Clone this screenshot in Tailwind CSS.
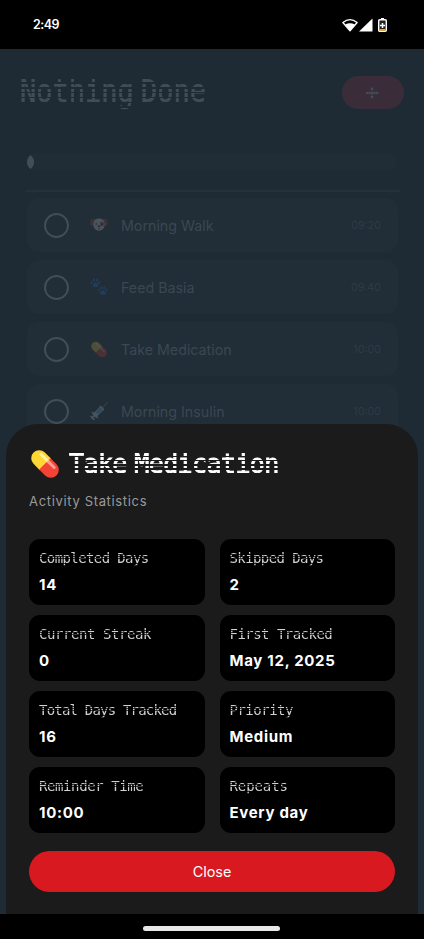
<!DOCTYPE html>
<html lang="en">
<head>
<meta charset="utf-8">
<meta name="viewport" content="width=device-width, initial-scale=1">
<title>Nothing Done</title>
<script src="https://cdn.jsdelivr.net/npm/@tailwindcss/browser@4"></script>
</head>
<body class="bg-black font-['Inter',sans-serif]">
<svg class="hidden">
  <symbol id="pill" viewBox="0 0 32 32">
    <g transform="rotate(45 16 16)">
      <path d="M15.7 8H6.8a8 8 0 0 0 0 16h8.9z" transform="translate(1 0)" fill="#fdd835"/>
      <path d="M16.7 8h8.5a8 8 0 0 1 0 16h-8.5z" transform="translate(-1 0)" fill="#f44336"/>
      <path d="M6.5 12h9.5" stroke="#fff0a0" stroke-width="3" stroke-linecap="round"/>
      <path d="M17 12h8" stroke="#ff9b91" stroke-width="3" stroke-linecap="round"/>
    </g>
  </symbol>
</svg>
<div class="relative flex h-[939px] w-[424px] flex-col overflow-hidden">
  <header class="flex h-[49px] shrink-0 items-center justify-between bg-black pl-[33px] pr-[36px] text-white">
    <span class="pt-px text-[12.5px] font-semibold tracking-[-0.5px]">2:49</span>
    <div class="flex items-center">
      <svg class="h-[14px] w-[16px]" viewBox="0 0 16 14"><path d="M.9 4.5Q8-1.3 15.1 4.5L8 12.8z" fill="none" stroke="#fff" stroke-width="1.4" stroke-linejoin="round"/><path d="M3.2 6.600Q8 4 12.800 6.600L8 13z" fill="#fff"/></svg>
      <svg class="ml-px h-[14px] w-[14px]" viewBox="0 0 14 14"><path d="M0 13.5 13.5.5v13z" fill="#fff"/></svg>
      <svg class="ml-[5px] mr-px h-[14px] w-[9px]" viewBox="0 0 9 14"><path d="M3 0h3v2H3z" fill="#fff"/><rect x=".7" y="1.7" width="7.6" height="11.6" rx="1" fill="#222" stroke="#fff" stroke-width="1.4"/><path d="M4.5 5v5M2 7.5h5" stroke="#fff" stroke-width="1.5"/><path d="M1.5 11h6v1.8h-6z" fill="#f5a623"/></svg>
    </div>
  </header>

  <main class="h-[865px] shrink-0 bg-[#1e2b35] pt-[26px]">
    <div class="flex h-[33px] items-center justify-between pl-[20px] pr-[20px]">
      <h1 class="h-[33px] w-[200px] scale-y-[1.15] whitespace-nowrap font-['DejaVu_Sans_Mono',monospace] text-[27px] leading-[33px] tracking-[0px] text-[#414e58] [word-spacing:-9px] [-webkit-text-stroke:0.5px_#414e58] [mask-image:repeating-linear-gradient(transparent_0_1.4px,#000_1.4px_4.2px)]">Nothing Done</h1>
      <button class="mb-[-2px] flex h-[33px] w-[62px] items-center justify-center rounded-full bg-[#3a2d39]" aria-label="Add">
        <svg class="h-[14px] w-[14px]" viewBox="0 0 14 14" fill="#414e58"><circle cx="6" cy="3" r="1.4"/><circle cx="6" cy="7" r="1.5"/><circle cx="6" cy="11" r="1.4"/><circle cx=".8" cy="7" r="1.3"/><circle cx="3.4" cy="7" r="1.3"/><circle cx="8.6" cy="7" r="1.3"/><circle cx="11.2" cy="7" r="1.3"/></svg>
      </button>
    </div>
    <div class="ml-[27px] mt-[45px] flex h-[17px] w-[370px] items-center rounded-[8px] bg-[#202d37]">
      <svg class="h-[14px] w-[7px]" viewBox="0 0 7 14"><path d="M3.5 0C8.2 4 8.2 10 3.5 14C-1.2 10-1.2 4 3.5 0" fill="#414e58"/></svg>
    </div>
    <div class="ml-[25px] mt-[20px] h-[2px] w-[375px] bg-[#24303a]"></div>
    <ul class="mt-[6px] flex flex-col gap-[8px] pl-[27px] pr-[26px] text-[#3b4852]">
      <li class="flex h-[54px] items-center rounded-[12px] bg-[#212d37] pl-[17px] pr-[17px]">
        <span class="h-[25px] w-[25px] rounded-full border-2 border-[#414e58]"></span>
        <svg class="ml-[21px] h-[18px] w-[18px]" viewBox="0 0 18 18"><path d="M5 3Q1 2 .3 6q-.3 4 1.700 4t3-3.500M13 3q4-1 4.700 3 .3 4-1.700 4t-3-3.500" fill="#3c3237"/><path d="M3.500 7Q4 2.500 9 2.500T14.500 7q.8 4-2 6.500-3.500 2.500-7 0-2.800-2.500-2-6.500" fill="#48535a"/><ellipse cx="12" cy="8" rx="1.900" ry="2.300" fill="#43333c"/><circle cx="6.300" cy="8" r=".8" fill="#252b32"/><circle cx="11.800" cy="8" r=".8" fill="#252b32"/><ellipse cx="9" cy="10.300" rx="1.400" ry=".9" fill="#252b32"/><path d="M8.300 12.300h1.500v1.500H8.300z" fill="#4b303b"/></svg>
        <span class="ml-[13px] flex-1 pt-[2px] text-[14.25px]">Morning Walk</span><span class="pt-[2px] text-[10.7px] text-[#2f3b45]">09:20</span>
      </li>
      <li class="flex h-[54px] items-center rounded-[12px] bg-[#212d37] pl-[17px] pr-[17px]">
        <span class="h-[25px] w-[25px] rounded-full border-2 border-[#414e58]"></span>
        <svg class="ml-[21px] h-[18px] w-[18px]" viewBox="0 0 18 18" fill="#213f5b"><ellipse cx="1.700" cy="4.500" rx="1.100" ry="1.600"/><ellipse cx="4" cy="2" rx="1.100" ry="1.600"/><ellipse cx="7" cy="2" rx="1.100" ry="1.600"/><ellipse cx="9.300" cy="4.500" rx="1.100" ry="1.600"/><path d="M5.500 4.500q2 0 3 3 0 2-3 1.300-3 .7-3-1.300 1-3 3-3"/><ellipse cx="9.200" cy="12" rx="1" ry="1.500"/><ellipse cx="11.500" cy="9.800" rx="1" ry="1.500"/><ellipse cx="14.300" cy="9.800" rx="1" ry="1.500"/><ellipse cx="16.500" cy="12" rx="1" ry="1.500"/><path d="M13 12.300q2 0 3 3 0 2-3 1.300-3 .7-3-1.300 1-3 3-3"/></svg>
        <span class="ml-[13px] flex-1 pt-[2px] text-[14.25px]">Feed Basia</span><span class="pt-[2px] text-[10.7px] text-[#2f3b45]">09:40</span>
      </li>
      <li class="flex h-[54px] items-center rounded-[12px] bg-[#212d37] pl-[17px] pr-[17px]">
        <span class="h-[25px] w-[25px] rounded-full border-2 border-[#414e58]"></span>
        <svg class="ml-[21px] h-[19px] w-[18px] opacity-20"><use href="#pill"/></svg>
        <span class="ml-[13px] flex-1 pt-[2px] text-[14.25px]">Take Medication</span><span class="pt-[2px] text-[10.7px] text-[#2f3b45]">10:00</span>
      </li>
      <li class="flex h-[54px] items-center rounded-[12px] bg-[#212d37] pl-[17px] pr-[17px]">
        <span class="h-[25px] w-[25px] rounded-full border-2 border-[#414e58]"></span>
        <svg class="ml-[21px] h-[18px] w-[18px]" viewBox="0 0 18 18"><path d="m12 6 5.500-5.500" stroke="#245050"/><path d="m4 14 8-8" stroke="#42525e" stroke-width="5"/><path d="m7 11 5-5" stroke="#304958" stroke-width="3"/><path d="m1.500 16.500 3-3M.5 14l4 4M2 10l6 6M10 4l4 4" stroke="#465661" stroke-width="1.500"/></svg>
        <span class="ml-[13px] flex-1 pt-[2px] text-[14.25px]">Morning Insulin</span><span class="pt-[2px] text-[10.7px] text-[#2f3b45]">10:00</span>
      </li>
    </ul>
  </main>

  <section class="absolute left-[6px] top-[424px] h-[490px] w-[412px] rounded-t-[32px] bg-[#1b1b1b] pl-[23px] pr-[23px] pt-[24px]">
    <div class="flex h-[32px] items-center">
      <svg class="h-[32px] w-[32px]"><use href="#pill"/></svg>
      <h2 class="ml-[8px] h-[32px] w-[230px] scale-y-[1.07] whitespace-nowrap font-['DejaVu_Sans_Mono',monospace] text-[25px] leading-[32px] tracking-[-0.6px] text-white [word-spacing:-7px] [-webkit-text-stroke:0.8px_#fff] [mask-image:repeating-linear-gradient(#000_0_0.7px,transparent_0.7px_1.9px,#000_1.9px_3.9px)]">Take Medication</h2>
    </div>
    <p class="mt-[11px] text-[13px] leading-[20px] tracking-[0.66px] text-[#9a9a9a]">Activity Statistics</p>
    <dl class="mt-[28px] grid grid-cols-2 gap-x-[15px] gap-y-[10px] [&>div]:h-[66px] [&>div]:rounded-[11px] [&>div]:bg-black [&>div]:px-[10px] [&>div]:pt-[10px] [&_dt]:scale-y-[1.06] [&_dt]:whitespace-nowrap [&_dt]:font-['DejaVu_Sans_Mono',monospace] [&_dt]:text-[14px] [&_dt]:leading-[18px] [&_dt]:text-[#d2d2d2] [&_dt]:[mask-image:repeating-linear-gradient(#000_0_0.5px,#0004_0.5px_1.3px,#000_1.3px_2.2px)] [&_dd]:mt-[8px] [&_dd]:text-[15px] [&_dd]:font-bold [&_dd]:leading-[20px] [&_dd]:tracking-[0.7px] [&_dd]:text-white">
      <div><dt class="tracking-[-0.6px]">Completed Days</dt><dd>14</dd></div>
      <div><dt class="tracking-[-0.6px]">Skipped Days</dt><dd>2</dd></div>
      <div><dt class="tracking-[-0.43px]">Current Streak</dt><dd>0</dd></div>
      <div><dt class="tracking-[-0.53px]">First Tracked</dt><dd>May 12, 2025</dd></div>
      <div><dt class="tracking-[-0.8px]">Total Days Tracked</dt><dd>16</dd></div>
      <div><dt class="tracking-[-0.5px]">Priority</dt><dd>Medium</dd></div>
      <div><dt class="tracking-[-0.4px]">Reminder Time</dt><dd>10:00</dd></div>
      <div><dt class="tracking-[-0.1px]">Repeats</dt><dd>Every day</dd></div>
    </dl>
    <button class="mt-[18px] flex h-[41px] w-full items-center justify-center rounded-full bg-[#d81920] text-[14.4px] text-white">Close</button>
  </section>
  <footer class="flex h-[25px] shrink-0 items-center justify-center bg-black pr-[2px] pt-[4px]"><div class="h-[5px] w-[137px] rounded-full bg-[#e8e8e8]"></div></footer>
</div>
</body>
</html>
